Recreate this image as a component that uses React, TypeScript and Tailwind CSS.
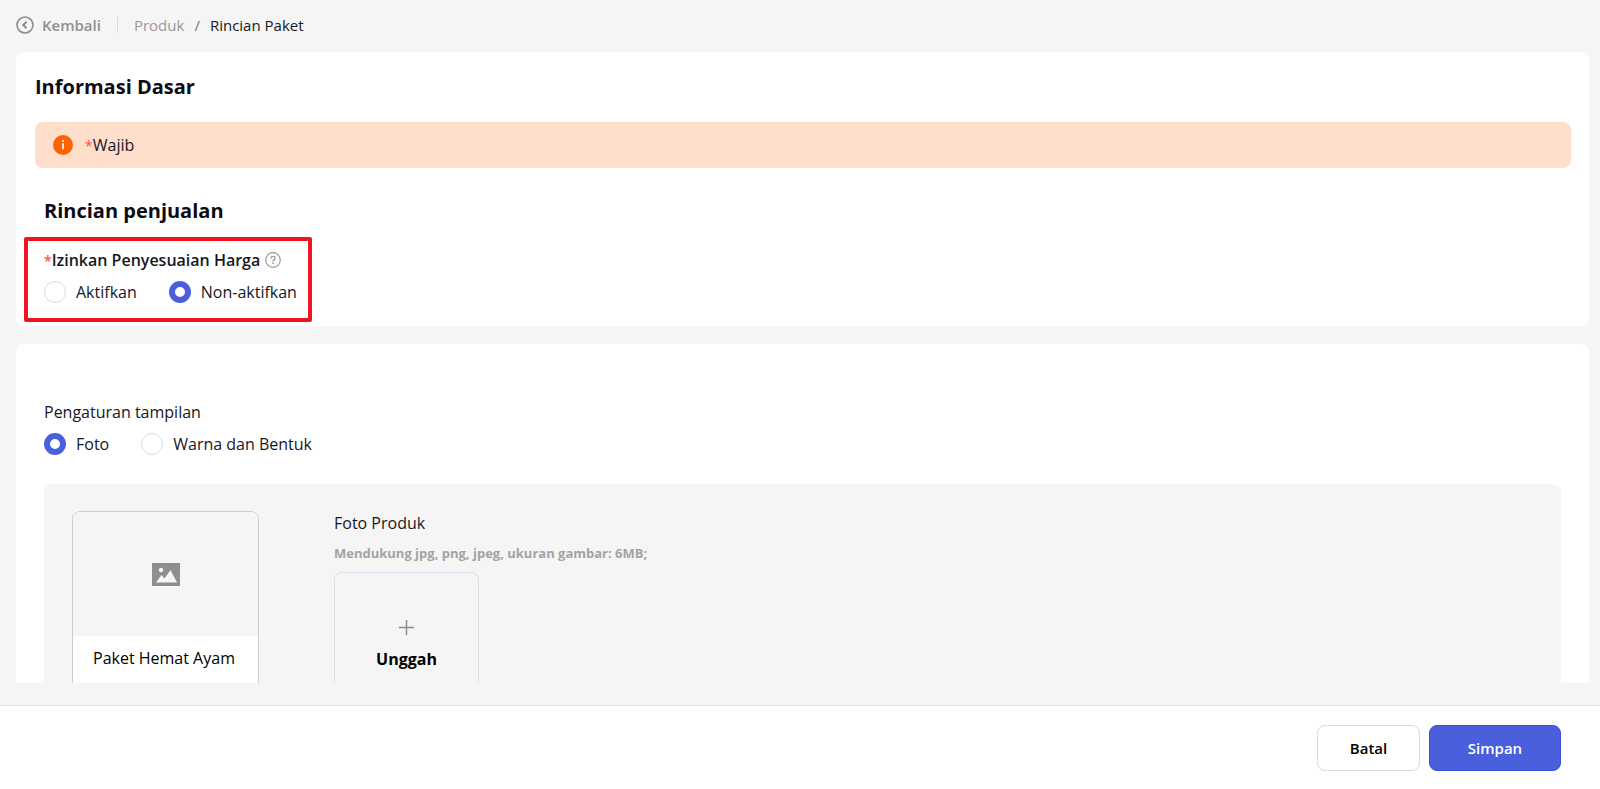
import { useState } from "react";

const PRICE_OPTIONS = [
  { value: "on", label: "Aktifkan" },
  { value: "off", label: "Non-aktifkan" },
];

const DISPLAY_OPTIONS = [
  { value: "photo", label: "Foto" },
  { value: "shape", label: "Warna dan Bentuk" },
];

function RadioGroup({
  name,
  labelledBy,
  options,
  value,
  onChange,
}: {
  name: string;
  labelledBy: string;
  options: { value: string; label: string }[];
  value: string;
  onChange: (value: string) => void;
}) {
  return (
    <div role="radiogroup" aria-labelledby={labelledBy} className="mt-2 flex gap-8">
      {options.map((o) => (
        <label key={o.value} className="flex items-center gap-[10px]">
          <input
            type="radio"
            name={name}
            value={o.value}
            checked={value === o.value}
            onChange={() => onChange(o.value)}
            className="size-[22px] appearance-none rounded-full border border-[#dcdcdc] bg-white checked:border-[6px] checked:border-[#4a5fdc]"
          />
          {o.label}
        </label>
      ))}
    </div>
  );
}

function BackIcon() {
  return (
    <svg viewBox="0 0 18 18" className="size-[18px]" fill="none" stroke="#8c8c8c">
      <circle cx="9" cy="9" r="8" strokeWidth="1.6" />
      <path d="M10.6 5.8 7.200 9l3.4 3.2" strokeWidth="1.9" />
    </svg>
  );
}

function InfoIcon() {
  return (
    <svg viewBox="0 0 20 20" className="size-5">
      <circle cx="10" cy="10" r="10" fill="#ff6200" />
      <path d="M9 5h2v2H9zM9 8.2h2v6H9z" fill="#ffe3d3" />
    </svg>
  );
}

function HelpIcon() {
  return (
    <svg viewBox="0 0 16 16" className="size-4" fill="none" stroke="#9a9a9a">
      <circle cx="8" cy="8" r="7.3" strokeWidth="1.2" />
      <path d="M5.9 6.4c0-1.2.9-2 2.1-2s2.1.8 2.1 1.9c0 1.5-2.1 1.6-2.1 3.2" strokeWidth="1.4" />
      <path d="M8 10.6v1.4" strokeWidth="1.5" />
    </svg>
  );
}

function PictureIcon() {
  return (
    <svg viewBox="0 0 28 23" className="h-[23px] w-7">
      <path d="M0 0h28v23H0z" fill="#8e8e8e" />
      <circle cx="9" cy="7" r="2.2" fill="#f5f5f5" />
      <path d="M4 19.5 9.5 12l3 3.5L18.500 7 25 19.500z" fill="#f5f5f5" />
    </svg>
  );
}

export default function App() {
  const [price, setPrice] = useState("off");
  const [display, setDisplay] = useState("photo");

  return (
    <div className="flex h-screen flex-col bg-[#f5f5f5] font-['Open_Sans',sans-serif] text-base leading-6 text-[#16181d]">
      <header className="flex h-[52px] shrink-0 items-center pb-[2px] pl-4 text-[15px]">
        <button type="button" className="flex items-center gap-2 font-semibold text-[#8f8f8f]">
          <BackIcon />
          Kembali
        </button>
        <span className="mx-4 h-4 w-px bg-[#d9d9d9]" />
        <nav className="flex gap-[10px]">
          <a href="#produk" className="text-[#999]">
            Produk
          </a>
          <span className="text-[#777]">/</span>
          <span>Rincian Paket</span>
        </nav>
      </header>

      <main className="min-h-0 flex-1 overflow-y-auto pr-[11px] pl-4 [scrollbar-width:none]">
        <section className="rounded-lg bg-white pt-5 pb-1">
          <h1 className="ml-[19px] text-xl leading-[30px] font-bold text-[#0b0d12]">
            Informasi Dasar
          </h1>
          <div className="mt-5 mr-[18px] ml-[19px] flex h-[46px] items-center gap-3 rounded-lg bg-[#ffdecc] pl-[18px]">
            <InfoIcon />
            <p>
              <span className="text-sm text-[#ff4d4f]">*</span>Wajib
            </p>
          </div>

          <h2 className="mt-7 ml-7 text-xl leading-[30px] font-bold text-[#0b0d12]">
            Rincian penjualan
          </h2>
          <div className="mt-[11px] ml-2 w-fit rounded-xs border-4 border-[#f0141e] pt-[7px] pr-[11px] pb-[14px] pl-4">
            <div className="flex items-center gap-[5px]">
              <span id="price-label" className="font-semibold">
                <span className="text-sm text-[#ff4d4f]">*</span>Izinkan Penyesuaian Harga
              </span>
              <button type="button" aria-label="Bantuan">
                <HelpIcon />
              </button>
            </div>
            <RadioGroup
              name="price"
              labelledBy="price-label"
              options={PRICE_OPTIONS}
              value={price}
              onChange={setPrice}
            />
          </div>
        </section>

        <section className="mt-[18px] rounded-lg bg-white px-7 pt-14 pb-7">
          <p id="display-label">Pengaturan tampilan</p>
          <RadioGroup
            name="display"
            labelledBy="display-label"
            options={DISPLAY_OPTIONS}
            value={display}
            onChange={setDisplay}
          />

          <div className="mt-7 flex items-start gap-[75px] rounded-lg bg-[#f5f5f5] px-7 py-[27px]">
            <div className="w-[187px] overflow-hidden rounded-lg border border-[#ccc] bg-white">
              <div className="flex h-[124px] items-center justify-center bg-[#f5f5f5]">
                <PictureIcon />
              </div>
              <p className="px-5 pt-[10px] pb-5 whitespace-nowrap text-black">Paket Hemat Ayam</p>
            </div>
            <div>
              <p>Foto Produk</p>
              <p className="mt-2 text-[13px] leading-5 font-bold text-[#a3a3a3]">
                Mendukung jpg, png, jpeg, ukuran gambar: 6MB;
              </p>
              <button
                type="button"
                className="mt-[9px] flex size-[145px] flex-col items-center rounded-lg border border-dotted border-[#c3c8d6] pt-[47px] font-bold text-black"
              >
                <svg viewBox="0 0 15 15" className="size-[15px]" stroke="#8c8c8c" strokeWidth="1.5">
                  <path d="M7.500 0v15M0 7.500h15" />
                </svg>
                <span className="mt-3">Unggah</span>
              </button>
            </div>
          </div>
        </section>
      </main>

      <footer className="mt-[22px] flex shrink-0 justify-end gap-[9px] border-t border-[#e4e4e4] bg-white pt-[19px] pr-[39px] pb-[18px] text-[15px]">
        <button
          type="button"
          className="h-[46px] w-[103px] rounded-lg border border-[#d9d9d9] bg-white font-semibold text-black"
        >
          Batal
        </button>
        <button
          type="button"
          className="h-[46px] w-[132px] rounded-lg border border-[#3a50d9] bg-[#4a5fdc] font-semibold text-white"
        >
          Simpan
        </button>
      </footer>
    </div>
  );
}
